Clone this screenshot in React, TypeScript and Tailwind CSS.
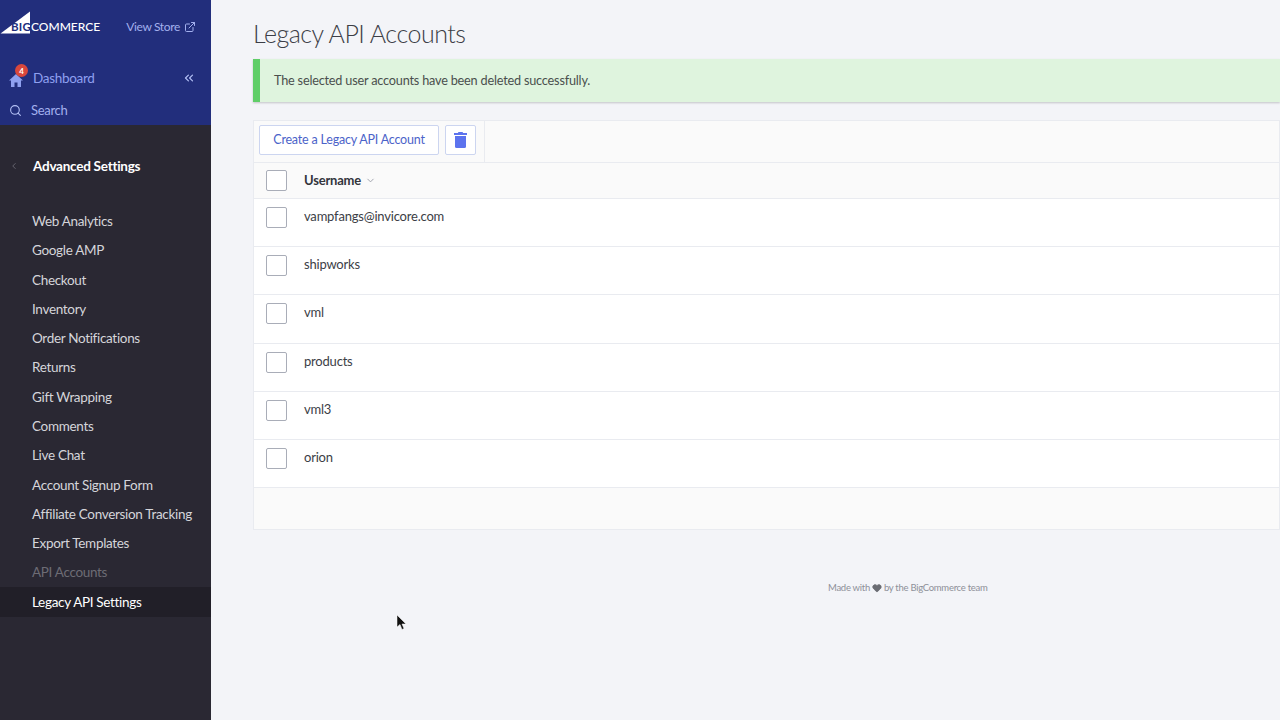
import { ExternalLink, ChevronsLeft, ChevronLeft, ChevronDown, Search, Heart } from "lucide-react";

const navItems = [
  "Web Analytics",
  "Google AMP",
  "Checkout",
  "Inventory",
  "Order Notifications",
  "Returns",
  "Gift Wrapping",
  "Comments",
  "Live Chat",
  "Account Signup Form",
  "Affiliate Conversion Tracking",
  "Export Templates",
];

const users = ["vampfangs@invicore.com", "shipworks", "vml", "products", "vml3", "orion"];

function Logo() {
  return (
    <div className="relative h-[24px] w-[100px]">
      <svg width="31" height="24" viewBox="0 0 31 24" className="absolute left-0 top-0">
        <path d="M0.5 22.5 L30 0.5 L30 22.5 Z" fill="#fff" />
      </svg>
      <span className="absolute left-[11px] top-[9px] text-[11.5px] font-bold leading-[14px] tracking-[0.3px] text-[#222e7c]">
        BIG
      </span>
      <span className="absolute left-[31px] top-[8px] text-[12px] font-medium leading-[16px] text-white">
        COMMERCE
      </span>
    </div>
  );
}

function Sidebar() {
  return (
    <aside className="flex h-[720px] w-[211px] shrink-0 flex-col bg-[#2a2833]">
      <div className="flex h-[125px] flex-col bg-[#222e7c]">
        <div className="flex h-[54px] items-start justify-between pr-[15px] pt-[11px]">
          <Logo />
          <div className="mt-[7px] flex items-center gap-[4px] text-[12px] leading-[18px] tracking-[-0.35px] text-[#a3b0ee]">
            <span>View Store</span>
            <ExternalLink size={12} />
          </div>
        </div>
        <div className="mt-[13px] flex h-[22px] items-center justify-between pl-[9px] pr-[15px]">
          <div className="flex items-center gap-[9px]">
            <div className="relative h-[18px] w-[15px]">
              <svg width="14" height="13" viewBox="0 0 14 13" className="absolute left-0 top-[5px]">
                <path d="M7 0 L14 6.5 L12 6.5 L12 13 L8.5 13 L8.5 8.5 L5.5 8.5 L5.5 13 L2 13 L2 6.5 L0 6.5 Z" fill="#8fa0f0" />
              </svg>
              <span className="absolute left-[6px] top-[-5px] flex h-[13px] w-[13px] items-center justify-center rounded-full bg-[#d9473c] text-[8px] font-bold leading-none text-white">
                4
              </span>
            </div>
            <span className="text-[13.5px] leading-[18px] tracking-[-0.3px] text-[#8fa0f0]">Dashboard</span>
          </div>
          <ChevronsLeft size={14} className="text-[#b4c0f5]" />
        </div>
        <div className="mt-[10px] flex h-[22px] items-center gap-[9px] pl-[9px]">
          <Search size={13} className="text-[#b4c0f5]" />
          <span className="text-[13px] leading-[18px] tracking-[-0.3px] text-[#a3b0ee]">Search</span>
        </div>
      </div>
      <div className="mt-[31px] flex h-[20px] items-center">
        <ChevronLeft size={10} className="ml-[9px] text-[#6f6e78]" />
        <span className="ml-[14px] text-[13.5px] font-bold leading-[20px] tracking-[-0.25px] text-white">Advanced Settings</span>
      </div>
      <nav className="mt-[30.4px] flex flex-col text-[13.5px] tracking-[-0.32px]">
        {navItems.map((item) => (
          <div key={item} className="flex h-[29.3px] items-center pl-[32px] text-[#d5d5da]">
            {item}
          </div>
        ))}
        <div className="flex h-[29.3px] items-center pl-[32px] text-[#6d6c75]">API Accounts</div>
        <div className="flex h-[29.3px] items-center bg-[#211f28] pl-[32px] text-white">Legacy API Settings</div>
      </nav>
    </aside>
  );
}

function Checkbox() {
  return <div className="h-[21px] w-[21px] rounded-[2px] border border-[#a9adb8] bg-white" />;
}

function AccountsTable() {
  return (
    <div className="mt-[18px] border border-[#e9ebf0] bg-white">
      <div className="flex h-[41px] bg-[#fafafa]">
        <div className="flex items-start gap-[6px] border-r border-[#e9ebf0] pl-[5px] pr-[8px] pt-[4px]">
          <button className="h-[30px] w-[180px] rounded-[2px] border border-[#ccd5f0] bg-white pt-[1px] text-[12.5px] tracking-[-0.2px] text-[#4b63c9]">
            Create a Legacy API Account
          </button>
          <button className="flex h-[30px] w-[31px] items-center justify-center rounded-[2px] border border-[#ccd5f0] bg-white">
            <svg width="13" height="16" viewBox="0 0 13 16">
              <path d="M4.5 0 H8.5 L9.2 1 H13 V3 H0 V1 H3.8 Z" fill="#5c73ee" />
              <path d="M1 4 H12 V14.5 Q12 16 10.5 16 H2.5 Q1 16 1 14.5 Z" fill="#5c73ee" />
            </svg>
          </button>
        </div>
      </div>
      <div className="flex h-[37px] items-center border-t border-b border-[#e9ebf0] bg-[#fafafa] pl-[12px]">
        <Checkbox />
        <span className="ml-[17px] text-[13px] font-bold tracking-[-0.2px] text-[#33353d]">Username</span>
        <ChevronDown size={11} className="ml-[4px] text-[#9a9ea8]" />
      </div>
      {users.map((user) => (
        <div key={user} className="flex h-[48.2px] items-start border-b border-[#e9ebf0] pl-[12px] pt-[8px]">
          <Checkbox />
          <span className="ml-[17px] text-[13px] leading-[18px] tracking-[-0.2px] text-[#3c3e46]">{user}</span>
        </div>
      ))}
      <div className="h-[41px] bg-[#fafafa]" />
    </div>
  );
}

export default function App() {
  return (
    <div className="flex h-[720px] w-[1280px] overflow-hidden bg-[#f3f4f8] font-['Lato','Noto_Sans',sans-serif]">
      <Sidebar />
      <main className="relative min-w-0 flex-1 pl-[42px] pt-[15px]">
        <h1 className="h-[36px] text-[25px] font-light leading-[36px] tracking-[-0.5px] text-[#3c3e46]">Legacy API Accounts</h1>
        <div className="mt-[8px] flex h-[43px] items-center border-l-[7px] border-[#5fce68] bg-[#dff4de] pl-[14px] text-[12.7px] tracking-[-0.2px] text-[#4a4f4d] shadow-[0_1px_2px_rgba(0,0,0,0.2)]">
          The selected user accounts have been deleted successfully.
        </div>
        <AccountsTable />
        <div className="mt-[51px] flex items-center pl-[575px] text-[9.5px] leading-[14px] tracking-[-0.28px] text-[#8e9099]">
          <span>Made with</span>
          <Heart size={10} fill="#6a6c73" stroke="#6a6c73" className="mx-[2px]" />
          <span>by the BigCommerce team</span>
        </div>
        <svg width="12" height="18" viewBox="0 0 12 18" className="absolute left-[185px] top-[614px]">
          <path d="M1 1 L1 13 L4 10.5 L6 15.5 L8 14.5 L6 10 L10 10 Z" fill="#111" stroke="#fff" strokeWidth="0.5" />
        </svg>
      </main>
    </div>
  );
}
